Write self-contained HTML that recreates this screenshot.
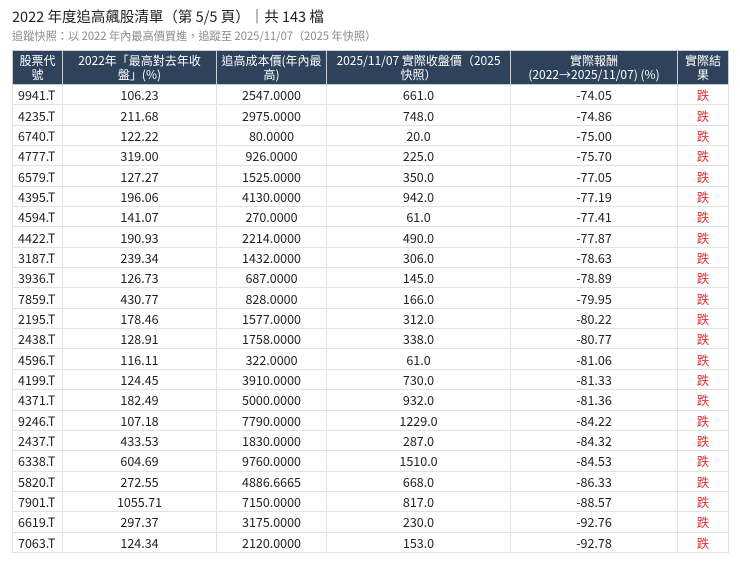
<!DOCTYPE html>
<html><head><meta charset="utf-8"><style>
body{margin:0;background:#fff;font-family:"Noto Sans CJK TC","Liberation Sans",sans-serif;color:#222;}
h1{position:absolute;left:12px;top:7px;margin:0;font-size:14.5px;font-weight:400;color:#222;line-height:20px;}
.sub{position:absolute;left:12px;top:28px;font-size:11.2px;color:#8a8a8a;line-height:16px;}
table{position:absolute;left:12px;top:50px;border-collapse:collapse;width:716px;table-layout:fixed;}
th{background:#2e435b;color:#fff;font-weight:400;font-size:12px;line-height:14px;height:33px;padding:0 2px;border:1px solid #c8ced6;text-align:center;}
td{font-size:12.5px;text-align:center;height:19.35px;padding:0;border:1px solid #e2e2e2;line-height:19px;}
td:first-child{text-align:left;padding-left:5px;}
.r{color:#d33;}
</style></head><body>
<h1>2022 年度追高飆股清單（第 5/5 頁）｜共 143 檔</h1>
<div class="sub">追蹤快照：以 2022 年內最高價買進，追蹤至 2025/11/07（2025 年快照）</div>
<table>
<colgroup><col style="width:50px"><col style="width:154px"><col style="width:110px"><col style="width:184px"><col style="width:167px"><col style="width:51px"></colgroup>
<tr><th>股票代<br>號</th><th>2022年「最高對去年收<br>盤」(%)</th><th>追高成本價(年內最<br>高)</th><th>2025/11/07 實際收盤價（2025<br>快照）</th><th>實際報酬<br>(2022→2025/11/07) (%)</th><th>實際結<br>果</th></tr>
<tr><td>9941.T</td><td>106.23</td><td>2547.0000</td><td>661.0</td><td>-74.05</td><td class="r">跌</td></tr>
<tr><td>4235.T</td><td>211.68</td><td>2975.0000</td><td>748.0</td><td>-74.86</td><td class="r">跌</td></tr>
<tr><td>6740.T</td><td>122.22</td><td>80.0000</td><td>20.0</td><td>-75.00</td><td class="r">跌</td></tr>
<tr><td>4777.T</td><td>319.00</td><td>926.0000</td><td>225.0</td><td>-75.70</td><td class="r">跌</td></tr>
<tr><td>6579.T</td><td>127.27</td><td>1525.0000</td><td>350.0</td><td>-77.05</td><td class="r">跌</td></tr>
<tr><td>4395.T</td><td>196.06</td><td>4130.0000</td><td>942.0</td><td>-77.19</td><td class="r">跌</td></tr>
<tr><td>4594.T</td><td>141.07</td><td>270.0000</td><td>61.0</td><td>-77.41</td><td class="r">跌</td></tr>
<tr><td>4422.T</td><td>190.93</td><td>2214.0000</td><td>490.0</td><td>-77.87</td><td class="r">跌</td></tr>
<tr><td>3187.T</td><td>239.34</td><td>1432.0000</td><td>306.0</td><td>-78.63</td><td class="r">跌</td></tr>
<tr><td>3936.T</td><td>126.73</td><td>687.0000</td><td>145.0</td><td>-78.89</td><td class="r">跌</td></tr>
<tr><td>7859.T</td><td>430.77</td><td>828.0000</td><td>166.0</td><td>-79.95</td><td class="r">跌</td></tr>
<tr><td>2195.T</td><td>178.46</td><td>1577.0000</td><td>312.0</td><td>-80.22</td><td class="r">跌</td></tr>
<tr><td>2438.T</td><td>128.91</td><td>1758.0000</td><td>338.0</td><td>-80.77</td><td class="r">跌</td></tr>
<tr><td>4596.T</td><td>116.11</td><td>322.0000</td><td>61.0</td><td>-81.06</td><td class="r">跌</td></tr>
<tr><td>4199.T</td><td>124.45</td><td>3910.0000</td><td>730.0</td><td>-81.33</td><td class="r">跌</td></tr>
<tr><td>4371.T</td><td>182.49</td><td>5000.0000</td><td>932.0</td><td>-81.36</td><td class="r">跌</td></tr>
<tr><td>9246.T</td><td>107.18</td><td>7790.0000</td><td>1229.0</td><td>-84.22</td><td class="r">跌</td></tr>
<tr><td>2437.T</td><td>433.53</td><td>1830.0000</td><td>287.0</td><td>-84.32</td><td class="r">跌</td></tr>
<tr><td>6338.T</td><td>604.69</td><td>9760.0000</td><td>1510.0</td><td>-84.53</td><td class="r">跌</td></tr>
<tr><td>5820.T</td><td>272.55</td><td>4886.6665</td><td>668.0</td><td>-86.33</td><td class="r">跌</td></tr>
<tr><td>7901.T</td><td>1055.71</td><td>7150.0000</td><td>817.0</td><td>-88.57</td><td class="r">跌</td></tr>
<tr><td>6619.T</td><td>297.37</td><td>3175.0000</td><td>230.0</td><td>-92.76</td><td class="r">跌</td></tr>
<tr><td>7063.T</td><td>124.34</td><td>2120.0000</td><td>153.0</td><td>-92.78</td><td class="r">跌</td></tr>
</table>
</body></html>
